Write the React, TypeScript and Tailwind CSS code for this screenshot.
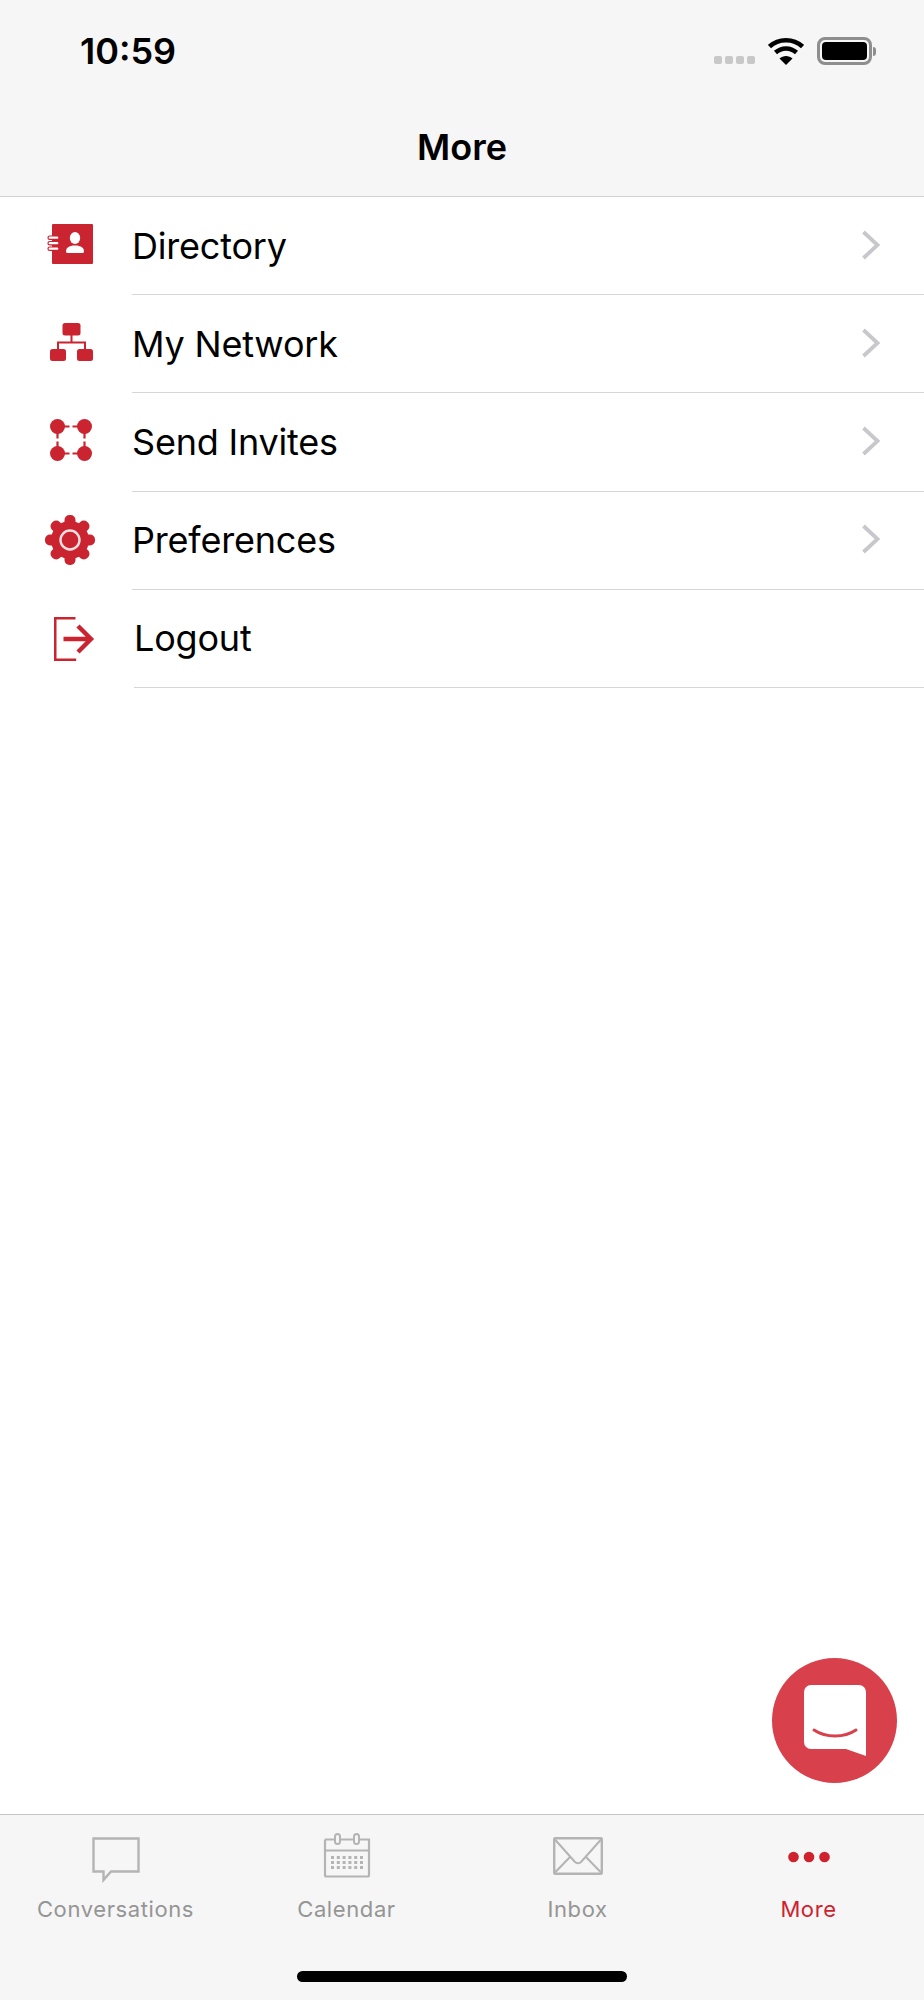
import React from 'react';

const RED = '#c9242f';

const DirectoryIcon = () => (
  <svg width="46" height="40" viewBox="0 0 46 40" className="ml-[47px] -mt-[4px]">
    <rect x="5" y="0" width="41" height="40" rx="1" fill={RED} />
    {[12, 17.5, 23].map((y) => (
      <rect key={y} x="1" y={y} width="11" height="3.4" rx="1.7" fill="#fff" stroke={RED} strokeWidth="1.2" />
    ))}
    <ellipse cx="28" cy="14" rx="5.2" ry="6" fill="#fff" />
    <path d="M19 27.500c0-4 3-5 6.500-6h5c3.500 1 6.500 2 6.500 6 0 1-1 1.500-2 1.500H21c-1 0-2-.5-2-1.500z" fill="#fff" />
  </svg>
);

const NetworkIcon = () => (
  <svg width="43" height="38" viewBox="0 0 43 38" className="ml-[50px] -mt-[4px]">
    <rect x="12.500" y="0" width="18" height="12.500" rx="2.500" fill={RED} />
    <path d="M21.500 12v7M8 26v-6.500h27V26" fill="none" stroke={RED} strokeWidth="2" />
    <rect x="0" y="26" width="16" height="12" rx="2.500" fill={RED} />
    <rect x="27" y="26" width="16" height="12" rx="2.500" fill={RED} />
  </svg>
);

const InvitesIcon = () => (
  <svg width="42" height="42" viewBox="0 0 42 42" className="ml-[50px] -mt-[4px]">
    <circle cx="7.500" cy="7.500" r="7.500" fill={RED} />
    <circle cx="34.500" cy="7.500" r="7.500" fill={RED} />
    <circle cx="7.500" cy="34.500" r="7.500" fill={RED} />
    <circle cx="34.500" cy="34.500" r="7.500" fill={RED} />
    <path d="M14 7.500h5.500M22.500 7.500h5.500M14 34.500h5.500M22.500 34.500h5.500M7.500 14v5.500M7.500 22.500v5.500M34.500 14v5.500M34.500 22.500v5.500" stroke={RED} strokeWidth="2.200" />
  </svg>
);

const GearIcon = () => (
  <svg width="50" height="50" viewBox="0 0 50 50" className="ml-[45px] -mt-[2px]">
    <circle cx="25" cy="25" r="19" fill={RED} />
    {[0, 45, 90, 135, 180, 225, 270, 315].map((a) => (
      <rect key={a} x="19.500" y="0" width="11" height="14" rx="5" fill={RED} transform={`rotate(${a} 25 25)`} />
    ))}
    <circle cx="25" cy="25" r="9.500" fill={RED} stroke="#f5dfe0" strokeWidth="2.400" />
  </svg>
);

const LogoutIcon = () => (
  <svg width="41" height="44" viewBox="0 0 41 44" className="ml-[54px]">
    <path d="M21.500 1.200H1.200v41.600h21" fill="none" stroke={RED} strokeWidth="2.600" />
    <path d="M9.500 22h27M24 9 37 22 24 35" fill="none" stroke={RED} strokeWidth="4.400" />
  </svg>
);

const Chevron = () => (
  <svg width="20" height="30" viewBox="0 0 20 30" className="mr-[43px] -mt-[2px] shrink-0">
    <path d="M2.500 2 16.500 15 2.500 28" fill="none" stroke="#c7c7cc" strokeWidth="3.800" />
  </svg>
);

const rows = [
  { label: 'Directory', icon: <DirectoryIcon />, chevron: true },
  { label: 'My Network', icon: <NetworkIcon />, chevron: true },
  { label: 'Send Invites', icon: <InvitesIcon />, chevron: true },
  { label: 'Preferences', icon: <GearIcon />, chevron: true },
];

const Row = ({ label, icon, chevron }: { label: string; icon: React.ReactNode; chevron: boolean }) => (
  <div className="flex h-[98.200px] items-center">
    <div className="w-[132px] shrink-0">{icon}</div>
    <div className="flex h-full flex-1 items-center justify-between border-b border-[#d6d6d8]">
      <span className="text-[36px] tracking-[-0.2px] text-black">{label}</span>
      {chevron && <Chevron />}
    </div>
  </div>
);

const tabs = [
  {
    label: 'Conversations',
    offset: 'pt-[22px]',
    icon: (
      <svg width="48" height="46" viewBox="0 0 48 46">
        <path d="M1.500 1.500h45v33H19L11.500 43v-8.500h-10z" fill="none" stroke="#b4b4b4" strokeWidth="2.400" />
      </svg>
    ),
  },
  {
    label: 'Calendar',
    offset: 'pt-[17px]',
    icon: (
      <svg width="48" height="46" viewBox="0 0 48 46">
        <path d="M2 7.500h9M17 7.500h14M37 7.500h9v35.500a1.500 1.500 0 0 1-1.500 1.500h-41A1.500 1.500 0 0 1 2 43V7.500M2 18.500h44" fill="none" stroke="#b4b4b4" strokeWidth="2.200" />
        <rect x="12" y="2" width="5" height="10" rx="2.500" fill="none" stroke="#b4b4b4" strokeWidth="2" />
        <rect x="31" y="2" width="5" height="10" rx="2.500" fill="none" stroke="#b4b4b4" strokeWidth="2" />
        <path d="M8 25.500h32M8 30.500h32M8 35.500h32" stroke="#b4b4b4" strokeWidth="3" strokeDasharray="3 2.800" />
      </svg>
    ),
  },
  {
    label: 'Inbox',
    offset: 'pt-[22px]',
    icon: (
      <svg width="50" height="38" viewBox="0 0 50 38">
        <rect x="1.200" y="1.200" width="47.600" height="35.600" rx="1" fill="none" stroke="#b4b4b4" strokeWidth="2.400" />
        <path d="M1.500 2 22 25c1.500 1.500 4.500 1.500 6 0L48.500 2M1.500 36 17 20M48.500 36 33 20" fill="none" stroke="#b4b4b4" strokeWidth="2" />
      </svg>
    ),
  },
  {
    label: 'More',
    offset: 'pt-[36px]',
    active: true,
    icon: (
      <svg width="42" height="12" viewBox="0 0 42 12">
        <circle cx="5.500" cy="6" r="5.300" fill="#cf222e" />
        <circle cx="21" cy="6" r="5.300" fill="#cf222e" />
        <circle cx="36.500" cy="6" r="5.300" fill="#cf222e" />
      </svg>
    ),
  },
];

export default function App() {
  return (
    <div className="relative flex h-[2000px] w-[924px] flex-col bg-white font-['Inter','Liberation_Sans',sans-serif]">
      <header className="h-[197px] shrink-0 border-b border-[#d2d2d4] bg-[#f6f6f6]">
        <div className="flex h-[102px] items-center justify-between pl-[80px] pr-[48px]">
          <span className="text-[36px] font-semibold text-black">10:59</span>
          <div className="flex items-center">
            <div className="mt-[18px] mr-[13px] flex gap-[3px]">
              <span className="h-[8px] w-[8px] rounded-[2px] bg-[#c8c8c8]" />
              <span className="h-[8px] w-[8px] rounded-[2px] bg-[#c8c8c8]" />
              <span className="h-[8px] w-[8px] rounded-[2px] bg-[#c8c8c8]" />
              <span className="h-[8px] w-[8px] rounded-[2px] bg-[#c8c8c8]" />
            </div>
            <svg width="36" height="28" viewBox="0 0 36 28" className="mr-[13px]">
              <path d="M1.500 9.500C10.500 1 25.500 1 34.500 9.500" fill="none" stroke="#000" strokeWidth="4.500" />
              <path d="M7.500 15.500C13.500 10 22.500 10 28.500 15.500" fill="none" stroke="#000" strokeWidth="4.500" />
              <path d="M18 28 11.500 21.500C15 18 21 18 24.500 21.500z" fill="#000" />
            </svg>
            <div className="rounded-[8px] border-[3px] border-[#8e8e8e] p-[2px]">
              <div className="h-[18px] w-[45px] rounded-[4px] bg-black" />
            </div>
            <div className="ml-[1px] h-[9px] w-[3px] rounded-r-[3px] bg-[#8e8e8e]" />
          </div>
        </div>
        <h1 className="text-center text-[36px] leading-[90px] font-semibold text-black">More</h1>
      </header>

      <main className="flex-1">
        {rows.map((r) => (
          <Row key={r.label} {...r} />
        ))}
        <div className="flex h-[98.200px] items-center">
          <div className="w-[134px] shrink-0">
            <LogoutIcon />
          </div>
          <div className="flex h-full flex-1 items-center border-b border-[#d6d6d8]">
            <span className="text-[36px] tracking-[-0.2px] text-black">Logout</span>
          </div>
        </div>
      </main>

      {/* floating chat button */}
      <div className="absolute top-[1658px] left-[772px] flex h-[125px] w-[125px] items-center justify-center rounded-full bg-[#d8404b]">
        <svg width="62" height="71" viewBox="0 0 62 71" className="-mt-[1px]">
          <path d="M7 0h48a7 7 0 0 1 7 7v64l-20-7H7a7 7 0 0 1-7-7V7a7 7 0 0 1 7-7z" fill="#fff" />
          <path d="M10 45c12 8 30 8 42 0" fill="none" stroke="#d8404b" strokeWidth="3" strokeLinecap="round" />
        </svg>
      </div>

      <footer className="relative h-[186px] shrink-0 border-t border-[#c6c6c8] bg-[#f6f6f6]">
        <div className="flex">
          {tabs.map((t) => (
            <div key={t.label} className="flex flex-1 flex-col items-center">
              <div className={`flex h-[76px] w-full items-start justify-center ${t.offset}`}>{t.icon}</div>
              <span className={`mt-[3px] text-[22px] leading-[30px] tracking-[0.6px] ${t.active ? 'text-[#cf222e]' : 'text-[#959595]'}`}>
                {t.label}
              </span>
            </div>
          ))}
        </div>
        <div className="absolute bottom-[18px] left-[297px] h-[11px] w-[330px] rounded-full bg-black" />
      </footer>
    </div>
  );
}
